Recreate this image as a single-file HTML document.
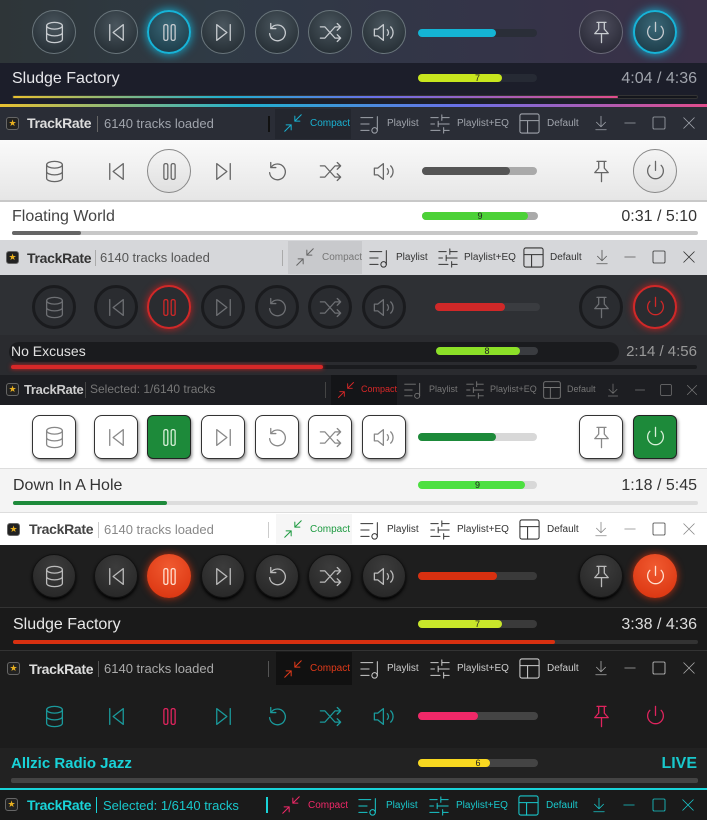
<!DOCTYPE html>
<html><head><meta charset="utf-8"><style>
*{margin:0;padding:0;box-sizing:border-box}
body{width:707px;height:820px;overflow:hidden;font-family:"Liberation Sans",sans-serif;background:#fff;position:relative}
.p{position:absolute;left:0;width:707px;overflow:hidden}
.ctrl{position:absolute;left:0;width:707px;height:44px}
.b{position:absolute;top:0;width:44px;height:44px;border-radius:50%;display:flex;align-items:center;justify-content:center;color:var(--ic)}
.b svg{width:27px;height:27px;fill:none;stroke:currentColor;stroke-width:1.15;stroke-linecap:round;stroke-linejoin:round}
.x1{left:32px}.x2{left:94px}.x3{left:147px}.x4{left:201px}.x5{left:255px}.x6{left:308px}.x7{left:362px}.x8{left:579px}.x9{left:633px}
.bar{position:absolute;left:418px;width:119px;height:8px;border-radius:4px}
.bar i{position:absolute;left:0;top:0;bottom:0;border-radius:4px}
.rt{font-size:9px;line-height:9px;text-align:center;color:#222;font-style:normal}
.rt span{position:relative;z-index:2}
.title{position:absolute;left:12px;font-size:16px}
.time{position:absolute;right:10px;font-size:16px}
.prog{position:absolute;left:12px;width:686px;height:4px;border-radius:2px}
.prog i{position:absolute;left:0;top:0;bottom:0;border-radius:2px}
.tb{position:absolute;left:0;width:707px;height:33px;font-size:13px}
.tb>*{position:absolute}
.logo{left:6px;top:10px;width:13px;height:13px;border-radius:3px;background:#222;border:1px solid #666;color:#e8b020;font-size:9px;line-height:11px;text-align:center}
.app{left:27px;top:8px;font-weight:bold;font-size:14px;letter-spacing:-0.3px}
.sep{width:1px;height:16px;top:9px}
.st{left:104px;top:9px}
.tb svg{fill:none;stroke:currentColor;stroke-width:1.1;stroke-linecap:round;stroke-linejoin:round}
.lab{font-size:10px;top:11px}
.cbox{left:275px;top:2px;width:76px;height:30px}
</style></head><body>
<svg width="0" height="0" style="position:absolute">
<defs>
<symbol id="db" viewBox="0 0 24 24"><ellipse cx="12" cy="6" rx="7" ry="3"/><path d="M5 6v12c0 1.7 3 3 7 3s7-1.3 7-3V6M5 12c0 1.7 3 3 7 3s7-1.3 7-3"/></symbol>
<symbol id="prev" viewBox="0 0 24 24"><path d="M6 5v14M18 5L9 12l9 7z"/></symbol>
<symbol id="pause" viewBox="0 0 24 24"><rect x="7" y="5" width="3.5" height="14" rx="1.5"/><rect x="13.5" y="5" width="3.5" height="14" rx="1.5"/></symbol>
<symbol id="next" viewBox="0 0 24 24"><path d="M18 5v14M6 5l9 7-9 7z"/></symbol>
<symbol id="rep" viewBox="0 0 24 24"><path d="M6.5 8A7 7 0 1 1 5 13"/><path d="M6 4v4.5h4.5"/></symbol>
<symbol id="shuf" viewBox="0 0 24 24"><path d="M3 7h4l9 10h5M3 17h4l9-10h5M18 4l3 3-3 3M18 14l3 3-3 3"/></symbol>
<symbol id="vol" viewBox="0 0 24 24"><path d="M3 9h3l5-4v14l-5-4H3zM14.5 9.5a3.5 3.5 0 0 1 0 5M17.5 7a7 7 0 0 1 0 10"/></symbol>
<symbol id="pin" viewBox="0 0 24 24"><path d="M8 3h8M9.5 3v6L6 13h12l-3.5-4V3M12 13v8"/></symbol>
<symbol id="pow" viewBox="0 0 24 24"><path d="M12 3v8M7 6.5a7 7 0 1 0 10 0"/></symbol>
<symbol id="cmp" viewBox="0 0 24 24"><path d="M21 3l-7 7M14 4.5V10h5.5M3 21l7-7M10 19.5V14H4.5"/></symbol>
<symbol id="pl" viewBox="0 0 24 24"><path d="M2 5h13M2 12h9M2 19h9M20 4v15"/><circle cx="17" cy="19" r="3"/></symbol>
<symbol id="eq" viewBox="0 0 24 24"><path d="M2 5h8M14 5h8M14 2v6M2 12h4M10 12h12M10 9v6M2 19h10M16 19h6M16 16v6"/></symbol>
<symbol id="lay" viewBox="0 0 24 24"><rect x="2" y="2" width="20" height="20" rx="2"/><path d="M2 9h20M10 9v13"/></symbol>
<symbol id="dl" viewBox="0 0 24 24"><path d="M12 3v14M6 11l6 6 6-6M5 21h14"/></symbol>
<symbol id="min" viewBox="0 0 24 24"><path d="M5 12h14"/></symbol>
<symbol id="max" viewBox="0 0 24 24"><rect x="4" y="4" width="16" height="16" rx="1.5"/></symbol>
<symbol id="cls" viewBox="0 0 24 24"><path d="M5 5l14 14M19 5L5 19"/></symbol>
</defs></svg>

<!-- P1 -->
<div class="p" style="top:0;height:140px;background:linear-gradient(90deg,#2e3538,#2f3a45 30%,#343448 70%,#3a3048);--ic:#c8ccd0">
 <div class="ctrl" style="top:10px">
  <div class="b x1" style="background:radial-gradient(circle at 50% 35%,#4a565e,#1e262c);border:1px solid #6a767c"><svg><use href="#db"/></svg></div>
  <div class="b x2" style="background:radial-gradient(circle at 50% 35%,#4a565e,#1e262c);border:1px solid #6a767c"><svg><use href="#prev"/></svg></div>
  <div class="b x3" style="background:radial-gradient(circle at 50% 35%,#3a6878,#183440);border:2px solid #16b4d8;box-shadow:0 0 10px #16b4d8"><svg><use href="#pause"/></svg></div>
  <div class="b x4" style="background:radial-gradient(circle at 50% 35%,#4a565e,#1e262c);border:1px solid #6a767c"><svg><use href="#next"/></svg></div>
  <div class="b x5" style="background:radial-gradient(circle at 50% 35%,#4a565e,#1e262c);border:1px solid #6a767c"><svg><use href="#rep"/></svg></div>
  <div class="b x6" style="background:radial-gradient(circle at 50% 35%,#4a565e,#1e262c);border:1px solid #6a767c"><svg><use href="#shuf"/></svg></div>
  <div class="b x7" style="background:radial-gradient(circle at 50% 35%,#4a565e,#1e262c);border:1px solid #6a767c"><svg><use href="#vol"/></svg></div>
  <div class="b x8" style="background:radial-gradient(circle at 50% 35%,#4e4e5e,#22222e);border:1px solid #6a6a78"><svg><use href="#pin"/></svg></div>
  <div class="b x9" style="background:radial-gradient(circle at 50% 35%,#3a6878,#183440);border:2px solid #16b4d8;box-shadow:0 0 10px #16b4d8"><svg><use href="#pow"/></svg></div>
 </div>
 <div class="bar" style="top:29px;background:#2a2e38"><i style="width:78px;background:#14b4d4"></i></div>
 <div style="position:absolute;top:63px;left:0;width:707px;height:44px;background:#1c1e2a"></div>
 <div class="title" style="top:70px;color:#e8e8ec">Sludge Factory</div>
 <div class="bar rt" style="top:74px;background:#262a34"><i style="width:84px;background:#c8e61e"></i><span>7</span></div>
 <div class="time" style="top:70px;color:#a0a4ac">4:04 / 4:36</div>
 <div class="prog" style="top:95px;background:#14161c;border:1px solid #333"><i style="width:605px;background:linear-gradient(90deg,#e8c030,#20b0d0 35%,#6a70e8 60%,#e04c8c)"></i></div>
 <div style="position:absolute;top:104px;left:0;width:707px;height:3px;background:linear-gradient(90deg,#e8c030,#20b0d0 35%,#6a70e8 65%,#e04c8c)"></div>
 <div class="tb" style="top:107px;background:#2a2d36;color:#a0a4ac">
  <div class="logo">★</div><div class="app" style="color:#ddd">TrackRate</div><div class="sep" style="left:97px;background:#666"></div><div class="st">6140 tracks loaded</div><div class="sep" style="left:268px;background:#111;width:2px"></div>
  <div class="cbox" style="background:#23262e"></div>
  <svg style="left:282px;top:5px;width:22px;height:22px;color:#1ab0d0"><use href="#cmp"/></svg><div class="lab" style="left:310px;color:#1ab0d0">Compact</div>
  <svg style="left:359px;top:6px;width:22px;height:22px"><use href="#pl"/></svg><div class="lab" style="left:387px">Playlist</div>
  <svg style="left:429px;top:6px;width:22px;height:22px"><use href="#eq"/></svg><div class="lab" style="left:457px">Playlist+EQ</div>
  <svg style="left:518px;top:5px;width:23px;height:23px"><use href="#lay"/></svg><div class="lab" style="left:547px">Default</div>
  <svg style="left:592px;top:7px;width:18px;height:18px"><use href="#dl"/></svg>
  <svg style="left:621px;top:7px;width:18px;height:18px"><use href="#min"/></svg>
  <svg style="left:650px;top:7px;width:18px;height:18px"><use href="#max"/></svg>
  <svg style="left:680px;top:7px;width:18px;height:18px"><use href="#cls"/></svg>
 </div>
</div>

<!-- P2 -->
<div class="p" style="top:140px;height:135px;background:linear-gradient(#fafafa,#e6e6e6 60px);--ic:#666">
 <div style="position:absolute;top:60px;left:0;width:707px;height:2px;background:#c8c8c8"></div>
 <div class="ctrl" style="top:9px">
  <div class="b x1"><svg><use href="#db"/></svg></div>
  <div class="b x2"><svg><use href="#prev"/></svg></div>
  <div class="b x3" style="border:1.5px solid #888;background:linear-gradient(#f4f4f4,#e0e0e0)"><svg><use href="#pause"/></svg></div>
  <div class="b x4"><svg><use href="#next"/></svg></div>
  <div class="b x5"><svg><use href="#rep"/></svg></div>
  <div class="b x6"><svg><use href="#shuf"/></svg></div>
  <div class="b x7"><svg><use href="#vol"/></svg></div>
  <div class="b x8"><svg><use href="#pin"/></svg></div>
  <div class="b x9" style="border:1.5px solid #888;background:linear-gradient(#f4f4f4,#e0e0e0)"><svg><use href="#pow"/></svg></div>
 </div>
 <div class="bar" style="top:27px;background:#aaa;left:422px;width:115px"><i style="width:88px;background:#555"></i></div>
 <div style="position:absolute;top:62px;left:0;width:707px;height:38px;background:#fff"></div>
 <div class="title" style="top:68px;color:#444">Floating World</div>
 <div class="bar rt" style="top:72px;left:422px;width:116px;background:#aaa"><i style="width:106px;background:#4cd137"></i><span>9</span></div>
 <div class="time" style="top:68px;color:#333">0:31 / 5:10</div>
 <div class="prog" style="top:91px;background:#c8c8c8"><i style="width:69px;background:#666"></i></div>
 <div class="tb" style="top:100px;height:35px;background:#d6d7da;color:#555">
  <div class="logo" style="top:11px">★</div><div class="app" style="color:#333;top:10px">TrackRate</div><div class="sep" style="left:95px;top:10px;background:#aaa"></div><div class="st" style="left:100px;top:10px">6140 tracks loaded</div><div class="sep" style="left:282px;top:10px;background:#aaa"></div>
  <div class="cbox" style="left:288px;top:1px;width:74px;height:33px;background:#c8c9cc"></div>
  <svg style="left:294px;top:6px;width:22px;height:22px;color:#666"><use href="#cmp"/></svg><div class="lab" style="left:322px;top:12px;color:#777">Compact</div>
  <svg style="left:368px;top:7px;width:22px;height:22px;color:#333"><use href="#pl"/></svg><div class="lab" style="left:396px;top:12px;color:#333">Playlist</div>
  <svg style="left:437px;top:7px;width:22px;height:22px;color:#333"><use href="#eq"/></svg><div class="lab" style="left:464px;top:12px;color:#333">Playlist+EQ</div>
  <svg style="left:522px;top:6px;width:23px;height:23px;color:#333"><use href="#lay"/></svg><div class="lab" style="left:550px;top:12px;color:#333">Default</div>
  <svg style="left:593px;top:8px;width:18px;height:18px;color:#555"><use href="#dl"/></svg>
  <svg style="left:621px;top:8px;width:18px;height:18px;color:#555"><use href="#min"/></svg>
  <svg style="left:650px;top:8px;width:18px;height:18px;color:#333"><use href="#max"/></svg>
  <svg style="left:680px;top:8px;width:18px;height:18px;color:#333"><use href="#cls"/></svg>
 </div>
</div>

<!-- P3 -->
<div class="p" style="top:275px;height:130px;background:#2e3034;--ic:#6e7074">
 <div class="ctrl" style="top:10px">
  <div class="b x1" style="background:#2a2c30;border:3px solid #1a1b1e"><svg><use href="#db"/></svg></div>
  <div class="b x2" style="background:#2a2c30;border:3px solid #1a1b1e"><svg><use href="#prev"/></svg></div>
  <div class="b x3" style="background:#2a2c30;border:2px solid #d02828;box-shadow:0 0 8px #c02020;color:#d02828"><svg><use href="#pause"/></svg></div>
  <div class="b x4" style="background:#2a2c30;border:3px solid #1a1b1e"><svg><use href="#next"/></svg></div>
  <div class="b x5" style="background:#2a2c30;border:3px solid #1a1b1e"><svg><use href="#rep"/></svg></div>
  <div class="b x6" style="background:#2a2c30;border:3px solid #1a1b1e"><svg><use href="#shuf"/></svg></div>
  <div class="b x7" style="background:#2a2c30;border:3px solid #1a1b1e"><svg><use href="#vol"/></svg></div>
  <div class="b x8" style="background:#2a2c30;border:3px solid #1a1b1e"><svg><use href="#pin"/></svg></div>
  <div class="b x9" style="background:#2a2c30;border:2px solid #d02828;box-shadow:0 0 8px #c02020;color:#d02828"><svg><use href="#pow"/></svg></div>
 </div>
 <div class="bar" style="top:28px;left:435px;width:105px;background:#3a3c40"><i style="width:70px;background:#d02828"></i></div>
 <div style="position:absolute;top:60px;left:0;width:707px;height:40px;background:#2a2b2f"></div>
 <div style="position:absolute;top:67px;left:9px;width:610px;height:20px;border-radius:10px;background:#1a1b1e"></div>
 <div class="title" style="top:68px;left:11px;font-size:14px;color:#e0e0e0">No Excuses</div>
 <div class="bar rt" style="top:72px;left:436px;width:102px;background:#3a3c40"><i style="width:84px;background:#8ce028"></i><span>8</span></div>
 <div class="time" style="top:68px;font-size:15px;color:#999">2:14 / 4:56</div>
 <div class="prog" style="top:90px;left:11px;width:686px;background:#1a1b1e"><i style="width:312px;background:#d82828;box-shadow:0 0 4px #d02020"></i></div>
 <div class="tb" style="top:100px;height:30px;background:#1d1e22;color:#777;font-size:12px">
  <div class="logo" style="top:8px">★</div><div class="app" style="color:#ccc;top:7px;left:24px;font-size:13px">TrackRate</div><div class="sep" style="left:85px;top:7px;background:#444"></div><div class="st" style="left:90px;top:7px">Selected: 1/6140 tracks</div><div class="sep" style="left:325px;top:7px;background:#444"></div>
  <div class="cbox" style="left:331px;top:0;width:66px;height:30px;background:#141518"></div>
  <svg style="left:336px;top:5px;width:20px;height:20px;color:#d82828"><use href="#cmp"/></svg><div class="lab" style="left:361px;top:9px;color:#d82828;font-size:9px">Compact</div>
  <svg style="left:403px;top:5px;width:20px;height:20px"><use href="#pl"/></svg><div class="lab" style="left:429px;top:9px;font-size:9px">Playlist</div>
  <svg style="left:465px;top:5px;width:20px;height:20px"><use href="#eq"/></svg><div class="lab" style="left:490px;top:9px;font-size:9px">Playlist+EQ</div>
  <svg style="left:542px;top:5px;width:20px;height:20px"><use href="#lay"/></svg><div class="lab" style="left:567px;top:9px;font-size:9px">Default</div>
  <svg style="left:605px;top:7px;width:16px;height:16px"><use href="#dl"/></svg>
  <svg style="left:632px;top:7px;width:16px;height:16px"><use href="#min"/></svg>
  <svg style="left:658px;top:7px;width:16px;height:16px"><use href="#max"/></svg>
  <svg style="left:684px;top:7px;width:16px;height:16px"><use href="#cls"/></svg>
 </div>
</div>

<!-- P4 -->
<div class="p" style="top:405px;height:140px;background:#fff;--ic:#888">
 <div class="ctrl" style="top:10px">
  <div class="b x1" style="border-radius:8px;border:1.5px solid #333;background:#fff;box-shadow:1px 2px 3px #888"><svg><use href="#db"/></svg></div>
  <div class="b x2" style="border-radius:8px;border:1.5px solid #333;background:#fff;box-shadow:1px 2px 3px #888"><svg><use href="#prev"/></svg></div>
  <div class="b x3" style="border-radius:6px;border:1.5px solid #222;background:#1d8a3a;color:#d8f0d8;box-shadow:1px 2px 3px #888"><svg><use href="#pause"/></svg></div>
  <div class="b x4" style="border-radius:8px;border:1.5px solid #333;background:#fff;box-shadow:1px 2px 3px #888"><svg><use href="#next"/></svg></div>
  <div class="b x5" style="border-radius:8px;border:1.5px solid #333;background:#fff;box-shadow:1px 2px 3px #888"><svg><use href="#rep"/></svg></div>
  <div class="b x6" style="border-radius:8px;border:1.5px solid #333;background:#fff;box-shadow:1px 2px 3px #888"><svg><use href="#shuf"/></svg></div>
  <div class="b x7" style="border-radius:8px;border:1.5px solid #333;background:#fff;box-shadow:1px 2px 3px #888"><svg><use href="#vol"/></svg></div>
  <div class="b x8" style="border-radius:8px;border:1.5px solid #333;background:#fff;box-shadow:1px 2px 3px #888"><svg><use href="#pin"/></svg></div>
  <div class="b x9" style="border-radius:6px;border:1.5px solid #222;background:#1d8a3a;color:#d8f0d8;box-shadow:1px 2px 3px #888"><svg><use href="#pow"/></svg></div>
 </div>
 <div class="bar" style="top:28px;background:#d8d8d8"><i style="width:78px;background:#1d8a3a"></i></div>
 <div style="position:absolute;top:63px;left:0;width:707px;height:44px;background:#f4f4f4;border-top:1px solid #ddd"></div>
 <div class="title" style="top:72px;left:13px;color:#333">Down In A Hole</div>
 <div class="bar rt" style="top:76px;background:#d8d8d8"><i style="width:107px;background:#4ce040"></i><span>9</span></div>
 <div class="time" style="top:72px;color:#333">1:18 / 5:45</div>
 <div class="prog" style="top:96px;left:13px;width:685px;background:#ddd"><i style="width:154px;background:#1d8a3a"></i></div>
 <div class="tb" style="top:107px;height:33px;background:#fff;color:#888;border-top:1px solid #ddd">
  <div class="logo" style="left:7px">★</div><div class="app" style="left:29px;color:#444">TrackRate</div><div class="sep" style="left:98px;background:#ccc"></div><div class="st">6140 tracks loaded</div><div class="sep" style="left:268px;background:#ccc"></div>
  <div class="cbox" style="left:276px;top:1px;background:#f6f6f6"></div>
  <svg style="left:282px;top:5px;width:22px;height:22px;color:#1d9a40"><use href="#cmp"/></svg><div class="lab" style="left:310px;color:#1d9a40">Compact</div>
  <svg style="left:359px;top:6px;width:22px;height:22px;color:#333"><use href="#pl"/></svg><div class="lab" style="left:387px;color:#333">Playlist</div>
  <svg style="left:429px;top:6px;width:22px;height:22px;color:#333"><use href="#eq"/></svg><div class="lab" style="left:457px;color:#333">Playlist+EQ</div>
  <svg style="left:518px;top:5px;width:23px;height:23px;color:#333"><use href="#lay"/></svg><div class="lab" style="left:547px;color:#333">Default</div>
  <svg style="left:592px;top:7px;width:18px;height:18px"><use href="#dl"/></svg>
  <svg style="left:621px;top:7px;width:18px;height:18px"><use href="#min"/></svg>
  <svg style="left:650px;top:7px;width:18px;height:18px;color:#444"><use href="#max"/></svg>
  <svg style="left:680px;top:7px;width:18px;height:18px"><use href="#cls"/></svg>
 </div>
</div>

<!-- P5 -->
<div class="p" style="top:545px;height:140px;background:#1e1e1e;--ic:#bbb">
 <div class="ctrl" style="top:9px">
  <div class="b x1" style="background:radial-gradient(circle at 50% 30%,#3c3c3c,#242424);border:1px solid #111;box-shadow:0 2px 3px #000"><svg><use href="#db"/></svg></div>
  <div class="b x2" style="background:radial-gradient(circle at 50% 30%,#3c3c3c,#242424);border:1px solid #111;box-shadow:0 2px 3px #000"><svg><use href="#prev"/></svg></div>
  <div class="b x3" style="background:radial-gradient(circle at 50% 30%,#f05a30,#d8300c);color:#ffe0d0;box-shadow:0 0 8px #c03010"><svg><use href="#pause"/></svg></div>
  <div class="b x4" style="background:radial-gradient(circle at 50% 30%,#3c3c3c,#242424);border:1px solid #111;box-shadow:0 2px 3px #000"><svg><use href="#next"/></svg></div>
  <div class="b x5" style="background:radial-gradient(circle at 50% 30%,#3c3c3c,#242424);border:1px solid #111;box-shadow:0 2px 3px #000"><svg><use href="#rep"/></svg></div>
  <div class="b x6" style="background:radial-gradient(circle at 50% 30%,#3c3c3c,#242424);border:1px solid #111;box-shadow:0 2px 3px #000"><svg><use href="#shuf"/></svg></div>
  <div class="b x7" style="background:radial-gradient(circle at 50% 30%,#3c3c3c,#242424);border:1px solid #111;box-shadow:0 2px 3px #000"><svg><use href="#vol"/></svg></div>
  <div class="b x8" style="background:radial-gradient(circle at 50% 30%,#3c3c3c,#242424);border:1px solid #111;box-shadow:0 2px 3px #000"><svg><use href="#pin"/></svg></div>
  <div class="b x9" style="background:radial-gradient(circle at 50% 30%,#f05a30,#d8300c);color:#ffe0d0;box-shadow:0 0 8px #c03010"><svg><use href="#pow"/></svg></div>
 </div>
 <div class="bar" style="top:27px;background:#3a3a3a"><i style="width:79px;background:#d83010"></i></div>
 <div style="position:absolute;top:62px;left:0;width:707px;height:43px;background:#1a1a1a;border-top:1px solid #333"></div>
 <div class="title" style="top:71px;left:13px;color:#e8e8e8">Sludge Factory</div>
 <div class="bar rt" style="top:75px;background:#3a3a3a"><i style="width:84px;background:#c8e62a"></i><span>7</span></div>
 <div class="time" style="top:71px;color:#ddd">3:38 / 4:36</div>
 <div class="prog" style="top:95px;left:13px;width:685px;background:#333"><i style="width:542px;background:#d83010"></i></div>
 <div class="tb" style="top:105px;height:35px;background:#1c1c1c;color:#aaa;border-top:1px solid #333">
  <div class="logo" style="left:7px;top:11px">★</div><div class="app" style="left:29px;top:10px;color:#ddd">TrackRate</div><div class="sep" style="left:98px;top:10px;background:#555"></div><div class="st" style="top:10px">6140 tracks loaded</div><div class="sep" style="left:268px;top:10px;background:#555"></div>
  <div class="cbox" style="left:276px;top:1px;height:33px;background:#111"></div>
  <svg style="left:282px;top:7px;width:22px;height:22px;color:#e03a1a"><use href="#cmp"/></svg><div class="lab" style="left:310px;top:12px;color:#e03a1a">Compact</div>
  <svg style="left:359px;top:7px;width:22px;height:22px;color:#ccc"><use href="#pl"/></svg><div class="lab" style="left:387px;top:12px;color:#ccc">Playlist</div>
  <svg style="left:429px;top:7px;width:22px;height:22px;color:#ccc"><use href="#eq"/></svg><div class="lab" style="left:457px;top:12px;color:#ccc">Playlist+EQ</div>
  <svg style="left:518px;top:6px;width:23px;height:23px;color:#ccc"><use href="#lay"/></svg><div class="lab" style="left:547px;top:12px;color:#ccc">Default</div>
  <svg style="left:592px;top:8px;width:18px;height:18px"><use href="#dl"/></svg>
  <svg style="left:621px;top:8px;width:18px;height:18px"><use href="#min"/></svg>
  <svg style="left:650px;top:8px;width:18px;height:18px;color:#ccc"><use href="#max"/></svg>
  <svg style="left:680px;top:8px;width:18px;height:18px"><use href="#cls"/></svg>
 </div>
</div>

<!-- P6 -->
<div class="p" style="top:685px;height:135px;background:#1c1c1c;--ic:#1a9a9c">
 <div class="ctrl" style="top:9px">
  <div class="b x1"><svg><use href="#db"/></svg></div>
  <div class="b x2"><svg><use href="#prev"/></svg></div>
  <div class="b x3" style="color:#e0245e"><svg><use href="#pause"/></svg></div>
  <div class="b x4"><svg><use href="#next"/></svg></div>
  <div class="b x5"><svg><use href="#rep"/></svg></div>
  <div class="b x6"><svg><use href="#shuf"/></svg></div>
  <div class="b x7"><svg><use href="#vol"/></svg></div>
  <div class="b x8" style="color:#e0245e"><svg><use href="#pin"/></svg></div>
  <div class="b x9" style="color:#e0245e"><svg><use href="#pow"/></svg></div>
 </div>
 <div class="bar" style="top:27px;width:120px;background:#444"><i style="width:60px;background:#f02868"></i></div>
 <div style="position:absolute;top:63px;left:0;width:707px;height:40px;background:#222"></div>
 <div class="title" style="top:70px;left:11px;font-size:15px;color:#19d3d8;font-weight:bold">Allzic Radio Jazz</div>
 <div class="bar rt" style="top:74px;width:120px;background:#444"><i style="width:72px;background:#f8d820"></i><span>6</span></div>
 <div class="time" style="top:70px;right:10px;color:#19c8cc;font-weight:bold">LIVE</div>
 <div class="prog" style="top:93px;left:11px;width:687px;height:5px;background:#444"></div>
 <div class="tb" style="top:103px;height:32px;background:#1a1a1a;color:#19c8cc;border-top:2px solid #19d3d8">
  <div class="logo" style="left:5px;top:8px">★</div><div class="app" style="left:27px;top:7px;color:#19d3d8">TrackRate</div><div class="sep" style="left:96px;top:7px;background:#19d3d8"></div><div class="st" style="left:103px;top:8px">Selected: 1/6140 tracks</div><div class="sep" style="left:266px;top:7px;width:2px;background:#19d3d8"></div>
  <svg style="left:280px;top:4px;width:22px;height:22px;color:#f02868"><use href="#cmp"/></svg><div class="lab" style="left:308px;top:10px;color:#f02868">Compact</div>
  <svg style="left:357px;top:5px;width:22px;height:22px"><use href="#pl"/></svg><div class="lab" style="left:386px;top:10px">Playlist</div>
  <svg style="left:428px;top:5px;width:22px;height:22px"><use href="#eq"/></svg><div class="lab" style="left:456px;top:10px">Playlist+EQ</div>
  <svg style="left:517px;top:4px;width:23px;height:23px"><use href="#lay"/></svg><div class="lab" style="left:546px;top:10px">Default</div>
  <svg style="left:590px;top:6px;width:18px;height:18px"><use href="#dl"/></svg>
  <svg style="left:620px;top:6px;width:18px;height:18px"><use href="#min"/></svg>
  <svg style="left:650px;top:6px;width:18px;height:18px"><use href="#max"/></svg>
  <svg style="left:679px;top:6px;width:18px;height:18px"><use href="#cls"/></svg>
 </div>
</div>
</body></html>
